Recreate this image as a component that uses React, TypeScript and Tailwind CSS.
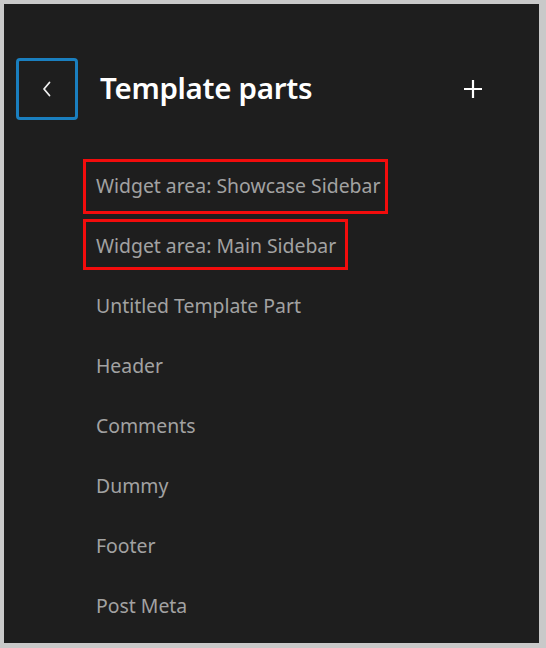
import React from "react";

const items = [
  "Widget area: Showcase Sidebar",
  "Widget area: Main Sidebar",
  "Untitled Template Part",
  "Header",
  "Comments",
  "Dummy",
  "Footer",
  "Post Meta",
];

export default function App() {
  return (
    <div className="w-[546px] h-[648px] bg-[#c9c9c9] pt-[4px] pl-[4px] pr-[7px] pb-[5px]" style={{ fontFamily: '"Noto Sans", "Open Sans", sans-serif' }}>
      <div className="w-full h-full bg-[#1e1e1e] pt-[54px]">
        <div className="flex items-center h-[62px]">
          <button className="ml-[12px] w-[62px] h-[62px] rounded-[4px] border-[3px] border-[#1a7fbf] flex items-center justify-center">
            <svg width="20" height="20" viewBox="0 0 20 20" fill="none">
              <path d="M12.5 3.5 L7 10 L12.5 16.5" stroke="#f0f0f0" strokeWidth="1.8" strokeLinecap="round" strokeLinejoin="round" />
            </svg>
          </button>
          <h1 className="ml-[22px] text-[29.5px] font-semibold text-white tracking-[-0.3px] leading-none pb-[2px]">Template parts</h1>
          <div className="ml-auto mr-[54px] w-[24px] h-[24px] flex items-center justify-center">
            <svg width="22" height="22" viewBox="0 0 22 22" fill="none">
              <path d="M11 2 V20 M2 11 H20" stroke="#ffffff" strokeWidth="2.2" />
            </svg>
          </div>
        </div>
        <ul className="mt-[36px] flex flex-col">
          {items.map((t, i) => (
            <li key={t} className="relative h-[60px] flex items-center pl-[92px]">
              <span className="text-[19.4px] text-[#a2a2a2] leading-none">{t}</span>
              {i === 0 && (
                <span className="absolute left-[79px] top-[3px] w-[305px] h-[55px] border-[3px] border-[#f20c0c]" />
              )}
              {i === 1 && (
                <span className="absolute left-[79px] top-[3px] w-[265px] h-[51px] border-[3px] border-[#f20c0c]" />
              )}
            </li>
          ))}
        </ul>
      </div>
    </div>
  );
}
